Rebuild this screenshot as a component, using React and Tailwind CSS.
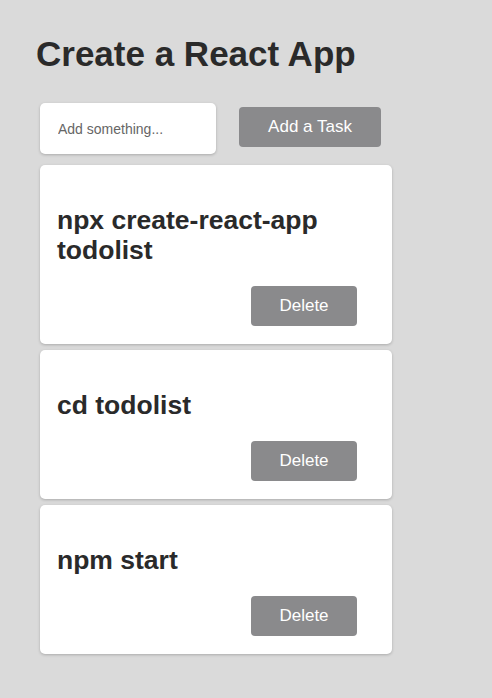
import React, { useState } from "react";

const FONT = { fontFamily: '"Liberation Sans", Arial, Helvetica, sans-serif' };

const initialTasks = [
  { id: 1, text: "npx create-react-app todolist" },
  { id: 2, text: "cd todolist" },
  { id: 3, text: "npm start" },
];

function TaskCard({ task, onDelete }) {
  return (
    <div className="w-[352px] bg-white rounded-[5px] shadow-[0_1px_3px_rgba(0,0,0,0.22)] pt-[40px] pb-[18px] pl-[17px] pr-[35px]">
      <h2 className="text-[26.5px] leading-[30px] font-bold text-[#2a2a2a] pr-[20px]">{task.text}</h2>
      <div className="flex justify-end mt-[21px]">
        <button
          onClick={() => onDelete(task.id)}
          className="w-[106px] h-[40px] rounded-[4px] bg-[#8a8a8c] text-white text-[17px]"
        >
          Delete
        </button>
      </div>
    </div>
  );
}

export default function App() {
  const [tasks, setTasks] = useState(initialTasks);
  const [value, setValue] = useState("");

  const addTask = () => {
    if (!value.trim()) return;
    setTasks((t) => [...t, { id: Date.now(), text: value.trim() }]);
    setValue("");
  };

  return (
    <div className="min-h-[698px] bg-[#dadada] pt-[34px] pb-[40px]" style={FONT}>
      <h1 className="ml-[36px] text-[35px] font-bold text-[#2a2a2a] leading-[40px]">Create a React App</h1>

      {/* input row */}
      <div className="ml-[40px] mt-[29px] flex items-center gap-[23px]">
        <input
          className="w-[176px] h-[51px] bg-white rounded-[5px] shadow-[0_1px_3px_rgba(0,0,0,0.22)] pl-[18px] text-[14px] text-[#333] placeholder:text-[#666] outline-none"
          placeholder="Add something..."
          value={value}
          onChange={(e) => setValue(e.target.value)}
        />
        <button
          onClick={addTask}
          className="w-[142px] h-[40px] -mt-[3px] rounded-[4px] bg-[#8a8a8c] text-white text-[17px]"
        >
          Add a Task
        </button>
      </div>

      {/* task list */}
      <div className="ml-[40px] mt-[11px] flex flex-col gap-[6px]">
        {tasks.map((t) => (
          <TaskCard key={t.id} task={t} onDelete={(id) => setTasks((all) => all.filter((x) => x.id !== id))} />
        ))}
      </div>
    </div>
  );
}
